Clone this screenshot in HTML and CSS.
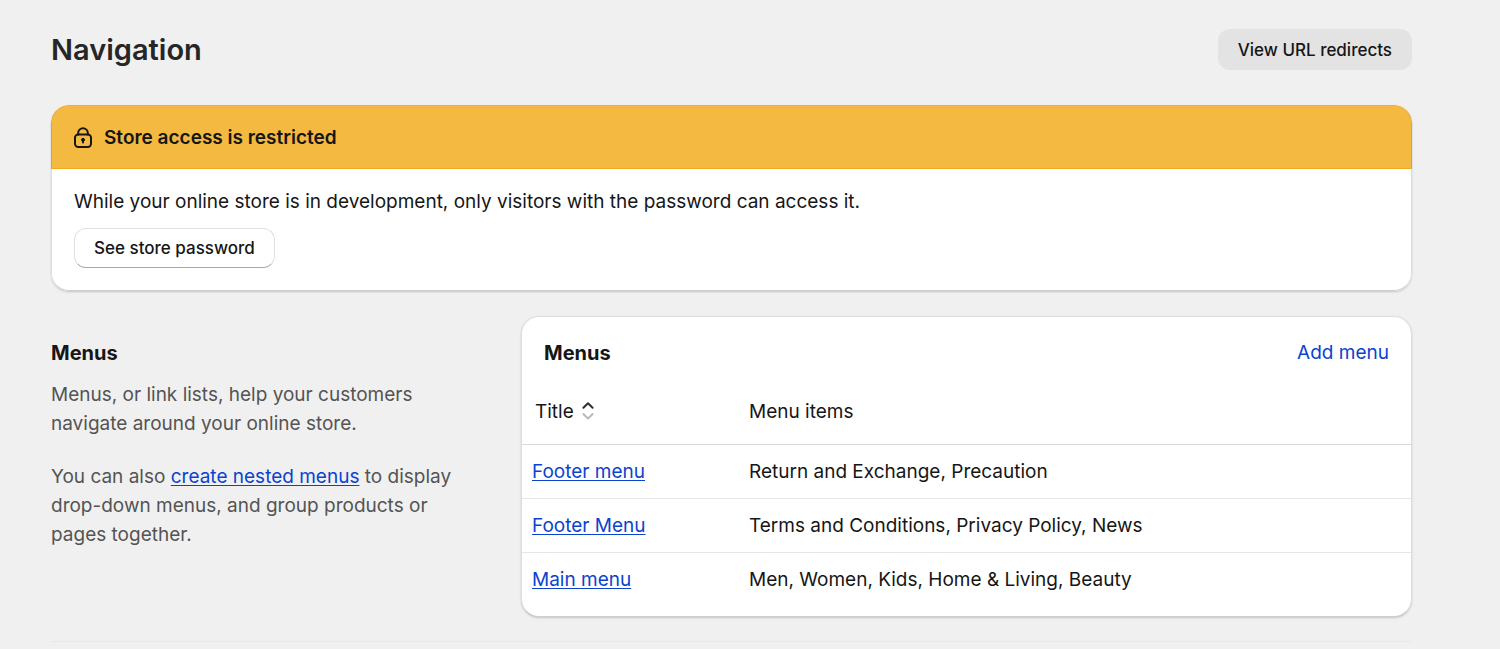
FILE: index.html
```html
<!DOCTYPE html>
<html lang="en">
<head>
<meta charset="utf-8">
<meta name="viewport" content="width=device-width, initial-scale=1">
<title>Navigation</title>
<link rel="stylesheet" href="styles.css">
</head>
<body>
<main class="page">
  <header class="page-header">
    <h1>Navigation</h1>
    <button type="button" class="btn btn-muted">View URL redirects</button>
  </header>
  <section class="card banner">
    <div class="banner-head">
      <svg class="lock" viewBox="0 0 20 22" fill="none" stroke="currentColor" stroke-width="2" stroke-linecap="round" aria-hidden="true">
        <path d="M5.2 7.4V6a4.8 4.8 0 0 1 9.6 0v1.4"/>
        <rect x="2" y="7.4" width="16" height="12.6" rx="3.2"/>
        <path d="M10 13v2.6"/>
        <circle cx="10" cy="12.8" r="1.5" fill="currentColor" stroke-width="1"/>
      </svg>
      <h2>Store access is restricted</h2>
    </div>
    <div class="banner-body">
      <p>While your online store is in development, only visitors with the password can access it.</p>
      <button type="button" class="btn btn-outline">See store password</button>
    </div>
  </section>
  <div class="columns">
    <section class="about">
      <h2>Menus</h2>
      <p>Menus, or link lists, help your customers navigate around your online store.</p>
      <p>You can also <a href="#nested">create nested menus</a> to display drop-down menus, and group products or pages together.</p>
    </section>
    <section class="card menus">
      <div class="menus-head">
        <h2>Menus</h2>
        <a class="add" href="#add">Add menu</a>
      </div>
      <table>
        <thead>
          <tr>
            <th scope="col"><button type="button" class="sort">Title
              <svg class="sort-icon" viewBox="0 0 14 20" fill="none" stroke-width="2" stroke-linecap="round" stroke-linejoin="round" aria-hidden="true">
                <path d="M2.4 6.8L7 2.2l4.6 4.6" stroke="#303030"/>
                <path d="M2.4 13L7 17.6l4.6-4.6" stroke="#b9b9b9"/>
              </svg></button></th>
            <th scope="col">Menu items</th>
          </tr>
        </thead>
        <tbody>
          <tr><td><a href="#footer-1">Footer menu</a></td><td>Return and Exchange, Precaution</td></tr>
          <tr><td><a href="#footer-2">Footer Menu</a></td><td>Terms and Conditions, Privacy Policy, News</td></tr>
          <tr><td><a href="#main">Main menu</a></td><td>Men, Women, Kids, Home &amp; Living, Beauty</td></tr>
        </tbody>
      </table>
    </section>
  </div>
  <hr>
</main>
</body>
</html>
```
FILE: styles.css
```css
* { box-sizing: border-box; }
body {
  margin: 0;
  background: #f0f0f0;
  color: #161616;
  font: 400 19px/29px Inter, sans-serif;
}
h1, h2, p { margin: 0; }
h1 { font-size: 29px; line-height: 40px; font-weight: 600; color: #262626; }
h2 { font-size: 20px; line-height: 28px; font-weight: 700; }
a { color: #0b43cf; text-decoration: underline; text-decoration-skip-ink: none; text-underline-offset: 2px; }
button { font: inherit; color: inherit; cursor: pointer; }
.page { padding: 29px 88px 0 51px; }
.page-header { display: flex; justify-content: space-between; align-items: center; margin-bottom: 35px; }
.btn { height: 41px; padding: 0 20px; border: 0; border-radius: 12px; font-size: 17px; font-weight: 500; line-height: 28px; }
.btn-muted { background: #e3e3e3; }
.btn-outline { height: 40px; padding: 0 19px; border: 1px solid #e0e0e0; border-bottom-color: #a8a8a8; background: #fff; }
.card {
  overflow: hidden;
  border: 1px solid #dedede;
  border-bottom-color: #cecece;
  border-radius: 18px;
  background: #fff;
  box-shadow: 0 1px 2px #0000002e;
}
.banner { margin-bottom: 25px; border: 0; }
.banner-head {
  display: flex;
  align-items: center;
  gap: 11px;
  padding: 18px 21px 16px;
  border: 1px solid #dfa52c;
  border-top-color: #eab23c;
  border-bottom-color: #f0ac1c;
  border-radius: 18px 18px 0 0;
  background: #f4b940;
}
.banner-head h2 { font-size: 19px; font-weight: 600; }
.lock { width: 20px; height: 22px; }
.banner-body {
  padding: 18px 22px 22px;
  border: 1px solid #dedede;
  border-top: 0;
  border-bottom-color: #cecece;
  border-radius: 0 0 18px 18px;
}
.banner-body p { margin-bottom: 12px; }
.columns { display: grid; grid-template-columns: 470px 1fr; align-items: start; }
.about { padding: 23px 60px 0 0; color: #545454; }
.about h2 { margin-bottom: 13px; color: #161616; }
.about p + p { margin-top: 24px; }
.menus { padding-bottom: 10px; }
.menus-head { display: flex; justify-content: space-between; align-items: center; padding: 21px 22px 12px; }
.add { text-decoration: none; }
table { width: 100%; border-collapse: collapse; table-layout: fixed; }
th, td { height: 54px; padding: 0 10px; text-align: left; font-weight: 400; }
th { height: 65px; border-bottom: 1px solid #d8d8d8; }
th:first-child, td:first-child { width: 217px; }
tr + tr td { border-top: 1px solid #e6e6e6; }
.sort { display: inline-flex; align-items: center; gap: 7px; padding: 0 3px; border: 0; background: none; }
.sort-icon { width: 14px; height: 20px; }
hr { height: 1px; margin: 24px 0 0; border: 0; background: #e8e8e8; }
```
